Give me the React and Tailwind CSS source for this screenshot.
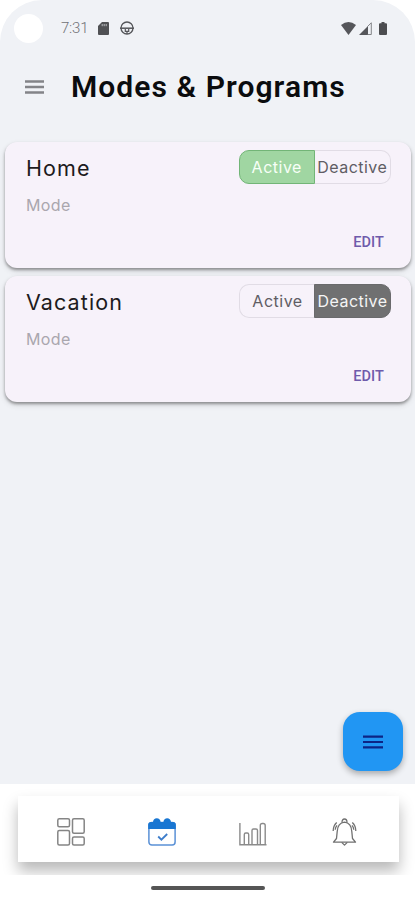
import React, { useState } from 'react';

const initialModes = [
  { id: 1, name: 'Home', type: 'Mode', active: true },
  { id: 2, name: 'Vacation', type: 'Mode', active: false },
];

const StatusBar = () => (
  <div className="flex h-[56px] shrink-0 items-center pl-[14px] pr-[28px]">
    <div className="h-[29px] w-[29px] rounded-full bg-white" />
    <span className="ml-[18px] w-[27px] whitespace-nowrap font-['Roboto'] text-[15px] font-light tracking-[-0.2px] text-[#6f7175]">7:31</span>
    <svg className="ml-[10px] h-[13px] w-[11px]" viewBox="0 0 11 13">
      <path d="M4 0H10Q11 0 11 1V12Q11 13 10 13H1Q0 13 0 12V4Z" fill="#505154" />
      <path d="M4.2 2v2.2M6.2 2v2.2M8.2 2v2.2" stroke="#b9babd" strokeWidth="1" />
    </svg>
    <svg className="ml-[11px] h-[14px] w-[14px]" viewBox="0 0 14 14" fill="none" stroke="#55565a">
      <circle cx="7" cy="7" r="6" strokeWidth="1.3" />
      <path d="M0 7.2h14" strokeWidth="1.5" />
      <path d="M5.3 8v2.4h3.4V8M7 10.4V13" strokeWidth="1.2" />
    </svg>
    <svg className="ml-auto h-[13px] w-[15px]" viewBox="0 0 15 13">
      <path d="M0 3Q7.5 -3 15 3L7.5 13Z" fill="#55565a" />
    </svg>
    <svg className="ml-[3px] h-[13px] w-[13px]" viewBox="0 0 13 13">
      <path d="M0 13L9 4V13Z" fill="#55565a" />
      <path d="M8.5 4.5L12.3 .8V12.5H8.5" fill="none" stroke="#77787c" strokeWidth=".9" />
    </svg>
    <svg className="ml-[7px] h-[13px] w-[8px]" viewBox="0 0 8 13">
      <path d="M2.5 0h3v1.3H7q1 0 1 1V12q0 1-1 1H1q-1 0-1-1V2.3q0-1 1-1h1.5Z" fill="#4c4d50" />
    </svg>
  </div>
);

const ModeCard = ({ mode, onToggle }) => (
  <div className="flex h-[126px] flex-col rounded-[12px] bg-[#f7f2fa] pl-[21px] pr-[20px] shadow-[0_2px_3px_rgba(0,0,0,0.35),0_3px_6px_rgba(0,0,0,0.12)]">
    <div className="mt-[8px] flex h-[34px] items-center justify-between">
      <h2 className="pt-[2px] font-['Inter'] text-[21.5px] tracking-[1.1px] text-[#1d1b20]">{mode.name}</h2>
      <div className="flex h-[34px] w-[152px] font-['Inter'] text-[16px]">
        <button
          className={`flex w-[76px] items-center justify-center whitespace-nowrap rounded-l-[10px] border tracking-[0.5px] ${
            mode.active
              ? 'border-[#72b577] bg-[#a0d6a2] text-[#f7fff7]'
              : 'border-r-0 border-[#e1dce5] text-[#605d64]'
          }`}
          onClick={() => onToggle(mode.id, true)}
        >
          Active
        </button>
        <button
          className={`flex w-[77px] items-center justify-center whitespace-nowrap rounded-r-[10px] border tracking-[0.45px] ${
            mode.active
              ? 'border-l-0 border-[#e1dce5] text-[#605d64]'
              : '-ml-px border-[#6a6a6c] bg-[#707071] text-[#f5f5f5]'
          }`}
          onClick={() => onToggle(mode.id, false)}
        >
          Deactive
        </button>
      </div>
    </div>
    <p className="mt-[9px] font-['Inter'] text-[16px] leading-[24px] tracking-[0.4px] text-[#aaa7ae]">{mode.type}</p>
    <button className="mr-[7px] mt-[16px] self-end font-['Roboto'] text-[14.5px] font-medium leading-[20px] tracking-[0.1px] text-[#6f5bab]">
      EDIT
    </button>
  </div>
);

const DashboardIcon = () => (
  <svg className="h-[28px] w-[28px]" viewBox="0 0 28 28" fill="none" stroke="#858585" strokeWidth="1.5">
    <rect x=".8" y=".8" width="11.7" height="8" rx="1.5" />
    <rect x=".8" y="12.6" width="11.7" height="14.5" rx="1.5" />
    <rect x="15.5" y=".8" width="11.7" height="14.5" rx="1.5" />
    <rect x="15.5" y="19.1" width="11.7" height="8" rx="1.5" />
  </svg>
);

const CalendarIcon = () => (
  <svg className="h-[28px] w-[28px]" viewBox="0 0 28 28" fill="none">
    <rect x=".9" y="4.5" width="26.2" height="22.5" rx="3" stroke="#5b91d6" strokeWidth="1.5" />
    <path d="M.2 11V6.5Q.2 4 3 4H5Q5.5 .3 8.8 .3T12.6 4H15.4Q16 .3 19.2 .3T23 4H25Q27.8 4 27.8 6.5V11Z" fill="#1976d2" />
    <path d="M10.2 18.5l3.2 3.2 5.8-5.7" stroke="#3d7dcb" strokeWidth="1.8" />
  </svg>
);

const ChartIcon = () => (
  <svg className="h-[24px] w-[28px]" viewBox="0 0 28 24" fill="none" stroke="#8b8b8b" strokeWidth="1.4">
    <path d="M.9 1V22.7H27.5" />
    <path d="M5.3 22.5V12.5Q5.3 11 6.8 11H8.2Q9.7 11 9.7 12.5V22.5M13 22.5V8.5Q13 7 14.5 7H17Q18.5 7 18.5 8.5V22.5M21.3 22.5V3.5Q21.3 1.5 23.3 1.5H24.2Q26.2 1.5 26.2 3.5V22.5" />
  </svg>
);

const BellIcon = () => (
  <svg className="h-[28px] w-[26px]" viewBox="0 0 26 28" fill="none" stroke="#707070" strokeWidth="1.3" strokeLinejoin="round">
    <path d="M1.5 24.2L4.5 20.5L5.2 13.5C5.5 8 7.5 4.8 12.5 4.2C17.5 4.8 19.5 8 19.8 13.5L20.5 20.5L23.5 24.2Z" />
    <path d="M10 4.5Q10 1 12.5 1T15 4.5M9.7 24.4L12.5 27.1L15.3 24.4" />
    <path d="M4.7 4.5Q1.2 7.8 1.2 13M3.2 11.7Q3.5 9 5 7.4M20.3 4.5Q23.8 7.8 23.8 13M21.8 11.7Q21.5 9 20 7.4" />
  </svg>
);

const BottomNav = () => (
  <div className="h-[91px] overflow-hidden pl-[18px] pr-[16px] pt-[12px]">
    <nav className="flex h-[66px] items-center bg-white pl-[39px] shadow-[0_9px_14px_rgba(0,0,0,0.28)]">
      <button className="mt-[5px]"><DashboardIcon /></button>
      <button className="ml-[63px] mt-[5px]"><CalendarIcon /></button>
      <button className="ml-[63px] mt-[9px]"><ChartIcon /></button>
      <button className="ml-[65px] mt-[5px]"><BellIcon /></button>
    </nav>
  </div>
);

const App = () => {
  const [modes, setModes] = useState(initialModes);

  const handleToggle = (id, active) => {
    setModes(prev => prev.map(mode => (mode.id === id ? { ...mode, active } : mode)));
  };

  return (
    <div className="h-[900px] w-[415px] overflow-hidden bg-white">
      <main className="flex h-[784px] flex-col rounded-t-[42px] bg-[#f0f2f6]">
        <StatusBar />
        <header className="flex h-[62px] items-center pl-[25px]">
          <button>
            <svg className="h-[14px] w-[19px]" viewBox="0 0 19 14" stroke="#838488" strokeWidth="2.6">
              <path d="M0 1.5h19M0 7h19M0 12.5h19" />
            </svg>
          </button>
          <h1 className="-mt-px ml-[27px] whitespace-nowrap font-['Roboto'] text-[30px] font-semibold tracking-[1.07px] text-[#0b0c0e]">
            Modes & Programs
          </h1>
        </header>

        <section className="mt-[24px] flex flex-col gap-[8px] pl-[5px] pr-[4px]">
          {modes.map(mode => (
            <ModeCard key={mode.id} mode={mode} onToggle={handleToggle} />
          ))}
        </section>

        <button className="mb-[13px] mr-[12px] mt-auto flex h-[59px] w-[60px] items-center justify-center self-end rounded-[17px] bg-[#2196f3] shadow-[0_3px_6px_rgba(0,0,0,0.3)]">
          <svg className="h-[14px] w-[20px]" viewBox="0 0 20 14" stroke="#0c2485" strokeWidth="2.2">
            <path d="M0 1.7h20M0 7h20M0 12.3h20" />
          </svg>
        </button>
      </main>

      <BottomNav />
      <div className="mx-auto mt-[11px] h-[4px] w-[114px] rounded-full bg-[#555]" />
    </div>
  );
};

export default App;
